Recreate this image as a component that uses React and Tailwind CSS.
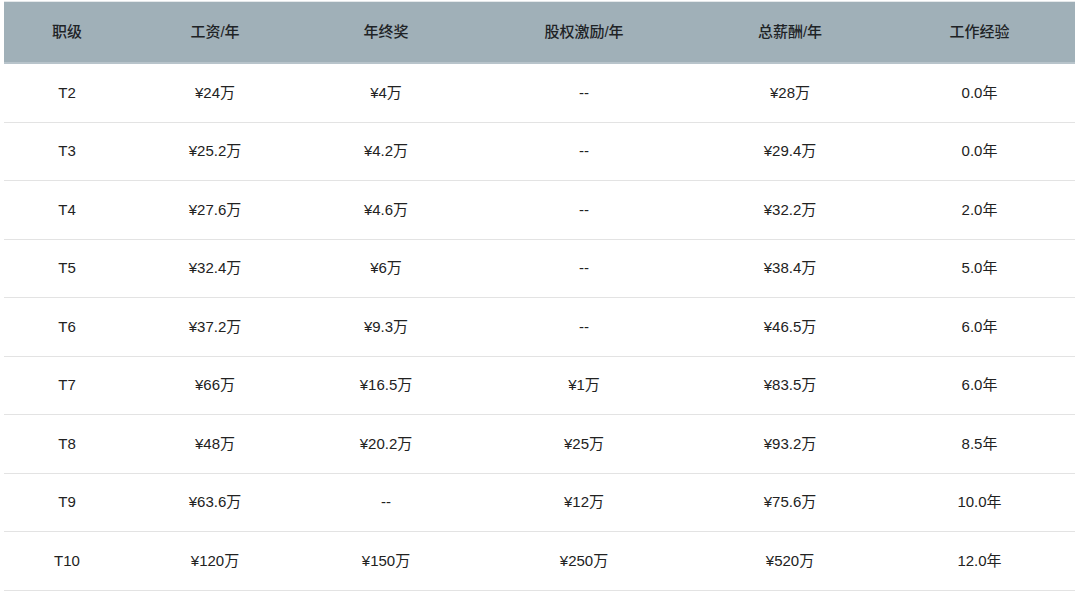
const rows = [
  ['T2', '¥24万', '¥4万', '--', '¥28万', '0.0年'],
  ['T3', '¥25.2万', '¥4.2万', '--', '¥29.4万', '0.0年'],
  ['T4', '¥27.6万', '¥4.6万', '--', '¥32.2万', '2.0年'],
  ['T5', '¥32.4万', '¥6万', '--', '¥38.4万', '5.0年'],
  ['T6', '¥37.2万', '¥9.3万', '--', '¥46.5万', '6.0年'],
  ['T7', '¥66万', '¥16.5万', '¥1万', '¥83.5万', '6.0年'],
  ['T8', '¥48万', '¥20.2万', '¥25万', '¥93.2万', '8.5年'],
  ['T9', '¥63.6万', '--', '¥12万', '¥75.6万', '10.0年'],
  ['T10', '¥120万', '¥150万', '¥250万', '¥520万', '12.0年'],
];

const headers = ['职级', '工资/年', '年终奖', '股权激励/年', '总薪酬/年', '工作经验'];

const cols = 'grid grid-cols-[126px_170px_172px_224px_188px_191px]';

export default function App() {
  return (
    <div
      className="w-[1080px] h-[594px] bg-white pt-[1px] px-[4px] text-[15px] text-[#222]"
      style={{ fontFamily: '"Liberation Sans", "Noto Sans CJK SC", sans-serif' }}
    >
      <div className="w-[1071px] border-t border-[#e4e8ea]">
        <div className={`${cols} h-[62px] bg-[#a0b0b8] border-b-2 border-[#b8c4cb] items-center`}>
          {headers.map((h) => (
            <div key={h} className="text-center font-medium text-[#1e2326]">{h}</div>
          ))}
        </div>
        {rows.map((r) => (
          <div key={r[0]} className={`${cols} h-[58.5px] border-b border-[#e3e3e3] items-center`}>
            {r.map((c, i) => (
              <div key={i} className="text-center">{c}</div>
            ))}
          </div>
        ))}
      </div>
    </div>
  );
}
